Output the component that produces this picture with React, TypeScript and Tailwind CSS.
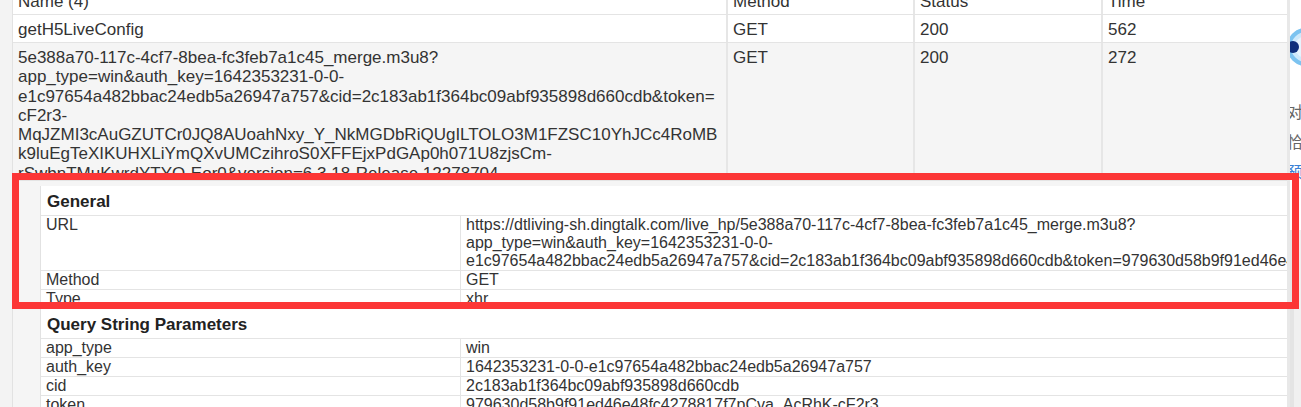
import React from "react";

const nameLines = [
  "5e388a70-117c-4cf7-8bea-fc3feb7a1c45_merge.m3u8?",
  "app_type=win&auth_key=1642353231-0-0-",
  "e1c97654a482bbac24edb5a26947a757&cid=2c183ab1f364bc09abf935898d660cdb&token=",
  "cF2r3-",
  "MqJZMI3cAuGZUTCr0JQ8AUoahNxy_Y_NkMGDbRiQUgILTOLO3M1FZSC10YhJCc4RoMB",
  "k9luEgTeXIKUHXLiYmQXvUMCzihroS0XFFEjxPdGAp0h071U8zjsCm-",
  "rSwbnTMuKwrdYTYQ-Eor0&version=6.3.18-Release.12278704",
];

const urlLines = [
  "https://dtliving-sh.dingtalk.com/live_hp/5e388a70-117c-4cf7-8bea-fc3feb7a1c45_merge.m3u8?",
  "app_type=win&auth_key=1642353231-0-0-",
  "e1c97654a482bbac24edb5a26947a757&cid=2c183ab1f364bc09abf935898d660cdb&token=979630d58b9f91ed46e48fc4278817f7pCva_AcRhK-cF2r3-MqJZMI3cAuGZUTCr0JQ8",
];

const queryParams: [string, string][] = [
  ["app_type", "win"],
  ["auth_key", "1642353231-0-0-e1c97654a482bbac24edb5a26947a757"],
  ["cid", "2c183ab1f364bc09abf935898d660cdb"],
  ["token", "979630d58b9f91ed46e48fc4278817f7pCva_AcRhK-cF2r3"],
];

function Row({
  cells,
  className,
}: {
  cells: React.ReactNode[];
  className: string;
}) {
  return (
    <div
      className={`grid grid-cols-[713px_187px_188px_186px] border-b border-[#e4e4e4] ${className}`}
    >
      {cells.map((c, i) => (
        <div
          key={i}
          className={`overflow-hidden pl-[5px] pt-[5px] ${
            i > 0 ? "border-l-2 border-[#e6e6e6]" : ""
          }`}
        >
          {c}
        </div>
      ))}
    </div>
  );
}

function KeyValue({ k, v }: { k: string; v: React.ReactNode }) {
  return (
    <div className="grid grid-cols-[419px_1fr] border-t border-[#e4e4e4] text-[16px] leading-[18px]">
      <div className="pl-[5px]">{k}</div>
      <div className="overflow-hidden whitespace-nowrap border-l border-[#e4e4e4] pl-[5px]">
        {v}
      </div>
    </div>
  );
}

function SectionTitle({ children }: { children: string }) {
  return (
    <div className="h-[29px] pl-[6px] pt-[3px] text-[17px] font-bold leading-[25px] text-[#222]">
      {children}
    </div>
  );
}

// sliver of the page behind the devtools panel
function RightEdge() {
  return (
    <div className="flex w-[14px] shrink-0 flex-col overflow-hidden border-l-[3px] border-[#e8e8e8]">
      <div className="h-[230px] bg-white">
        <svg width="11" height="40" viewBox="0 0 11 40" className="mt-[27px]">
          <circle cx="16" cy="20" r="19" fill="#cde9fb" />
          <circle cx="16" cy="20" r="17" fill="none" stroke="#7cc3f0" strokeWidth="4" />
          <circle cx="16" cy="20" r="11" fill="#e6f4fe" />
          <circle cx="3" cy="20" r="6" fill="#0f2f7c" />
        </svg>
        <div className="-ml-[3px] mt-[29px] whitespace-nowrap font-['Noto_Sans_CJK_SC',sans-serif] text-[16px] leading-[30px] text-[#666]">
          <div>对话</div>
          <div>恰好</div>
          <div className="text-[#3b82d6]">预览</div>
        </div>
      </div>
      <div className="flex flex-1 bg-[#f0f0f0]">
        <div className="w-[4px] bg-[#e4e4e4]" />
      </div>
    </div>
  );
}

export default function App() {
  return (
    <div className="relative h-[407px] w-[1301px] overflow-hidden bg-white font-['Liberation_Sans',Arial,sans-serif] text-[#333]">
      <div className="flex h-full">
        <div className="w-[13px] shrink-0 border-r border-[#e2e2e2] bg-[#f3f3f3]" />

        <div className="w-[1274px] shrink-0 overflow-hidden">
          <div className="-mt-[13px] text-[17px] leading-[19.3px]">
            <Row className="h-[28px] bg-white" cells={["Name (4)", "Method", "Status", "Time"]} />
            <Row className="h-[28px] bg-white" cells={["getH5LiveConfig", "GET", "200", "562"]} />
            <Row
              className="h-[138px] bg-[#f5f5f5]"
              cells={[
                <div className="whitespace-nowrap">
                  {nameLines.map((l) => (
                    <div key={l}>{l}</div>
                  ))}
                </div>,
                "GET",
                "200",
                "272",
              ]}
            />

            <div className="bg-[#f5f5f5] pl-[27px] pt-[5px]">
              <div className="border-l border-[#e2e2e2] bg-white">
                <SectionTitle>General</SectionTitle>
                <KeyValue
                  k="URL"
                  v={
                    <div>
                      {urlLines.map((l) => (
                        <div key={l}>{l}</div>
                      ))}
                    </div>
                  }
                />
                <KeyValue k="Method" v="GET" />
                <KeyValue k="Type" v="xhr" />

                <div className="border-t border-[#e4e4e4]">
                  <SectionTitle>Query String Parameters</SectionTitle>
                </div>
                {queryParams.map(([k, v]) => (
                  <KeyValue key={k} k={k} v={v} />
                ))}
                <div className="h-[40px]" />
              </div>
            </div>
          </div>
        </div>

        <RightEdge />
      </div>

      <div className="pointer-events-none absolute left-[12px] top-[173px] h-[136px] w-[1287px] border-[7px] border-[#fc3636]" />
    </div>
  );
}
